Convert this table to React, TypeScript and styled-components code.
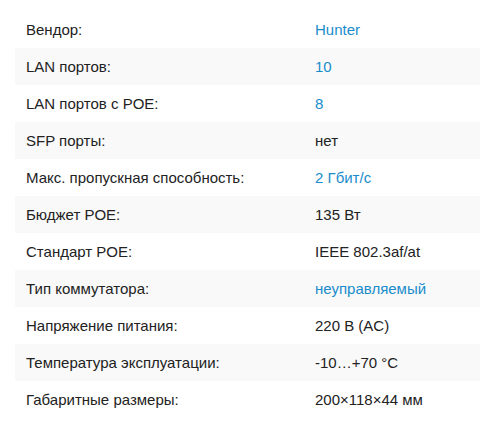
import { createGlobalStyle } from 'styled-components';
import styled from 'styled-components';

const GlobalStyle = createGlobalStyle`
  body {
    margin: 0;
    background: #fff;
    font-family: 'Liberation Sans', Arial, sans-serif;
  }
`;

const Wrapper = styled.div`
  padding: 11px 0 0 15px;
  overflow: hidden;
`;

const Table = styled.table`
  width: 480px;
  border-collapse: collapse;
  font-size: 15px;
  color: #222;
`;

const Row = styled.tr`
  height: 37px;
  &:nth-child(even) {
    background: #f9f9f9;
  }
`;

const Label = styled.td`
  width: 289px;
  padding: 0 0 0 11px;
  vertical-align: middle;
`;

const Value = styled.td<{ $link?: boolean }>`
  padding: 0;
  vertical-align: middle;
  color: ${(p) => (p.$link ? '#1a8ccb' : '#222')};
`;

const specs: { label: string; value: string; link?: boolean }[] = [
  { label: 'Вендор:', value: 'Hunter', link: true },
  { label: 'LAN портов:', value: '10', link: true },
  { label: 'LAN портов с POE:', value: '8', link: true },
  { label: 'SFP порты:', value: 'нет' },
  { label: 'Макс. пропускная способность:', value: '2 Гбит/с', link: true },
  { label: 'Бюджет POE:', value: '135 Вт' },
  { label: 'Стандарт POE:', value: 'IEEE 802.3af/at' },
  { label: 'Тип коммутатора:', value: 'неуправляемый', link: true },
  { label: 'Напряжение питания:', value: '220 В (AC)' },
  { label: 'Температура эксплуатации:', value: '-10…+70 °C' },
  { label: 'Габаритные размеры:', value: '200×118×44 мм' },
];

export default function App() {
  return (
    <>
      <GlobalStyle />
      <Wrapper>
        <Table>
          <tbody>
            {specs.map((s) => (
              <Row key={s.label}>
                <Label>{s.label}</Label>
                <Value $link={s.link}>{s.value}</Value>
              </Row>
            ))}
          </tbody>
        </Table>
      </Wrapper>
    </>
  );
}
